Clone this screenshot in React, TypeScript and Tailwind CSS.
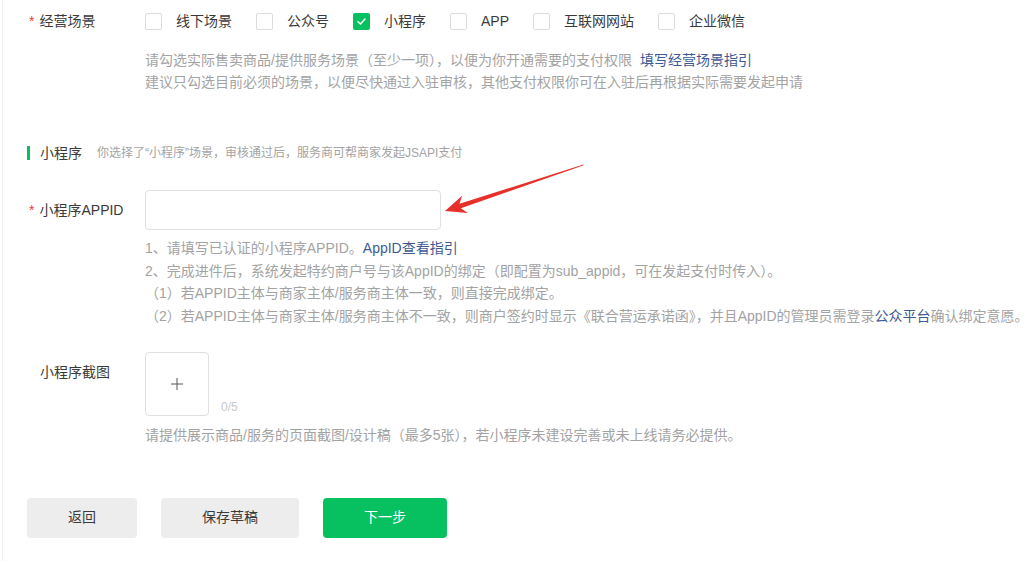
const scenes = [
  { label: "线下场景", checked: false },
  { label: "公众号", checked: false },
  { label: "小程序", checked: true },
  { label: "APP", checked: false },
  { label: "互联网网站", checked: false },
  { label: "企业微信", checked: false },
];

const font = { fontFamily: '"Liberation Sans", "Noto Sans CJK SC", sans-serif' };

function Checkbox({ checked }: { checked: boolean }) {
  if (checked) {
    return (
      <span className="flex h-[17px] w-[17px] items-center justify-center rounded-[2px] bg-[#07c160]">
        <svg width="11" height="11" viewBox="0 0 12 12" fill="none">
          <path d="M2.2 6.2 L4.9 8.8 L9.8 3.4" stroke="white" strokeWidth="1.6" strokeLinecap="round" strokeLinejoin="round" />
        </svg>
      </span>
    );
  }
  return <span className="h-[17px] w-[17px] rounded-[2px] border border-[#dcdcdc] bg-white" />;
}

export default function App() {
  return (
    <div className="relative h-[561px] w-[1033px] overflow-hidden bg-white text-[14px] text-[#3a3a3a]" style={font}>
      <div className="ml-[2px] h-full border-l border-[#f2f2f2]">
        {/* 经营场景 */}
        <div className="flex pt-[12px]">
          <div className="flex w-[142px] items-center pl-[26px] leading-[18px]">
            <span className="mr-[5px] text-[#e64340]">*</span>
            <span>经营场景</span>
          </div>
          <div className="flex items-center leading-[18px]">
            {scenes.map((s) => (
              <label key={s.label} className="mr-[24px] flex items-center gap-[14px]">
                <Checkbox checked={s.checked} />
                <span>{s.label}</span>
              </label>
            ))}
          </div>
        </div>
        <div className="ml-[142px] mt-[19px] leading-[22px] text-[#a3a3a3]">
          <p>
            请勾选实际售卖商品/提供服务场景（至少一项），以便为你开通需要的支付权限
            <span className="ml-[8px] text-[#3e5a93]">填写经营场景指引</span>
          </p>
          <p>建议只勾选目前必须的场景，以便尽快通过入驻审核，其他支付权限你可在入驻后再根据实际需要发起申请</p>
        </div>

        {/* 小程序 section header */}
        <div className="mt-[50px] flex items-center pl-[24px] leading-[20px]">
          <span className="mr-[10px] h-[14px] w-[3px] bg-[#07c160]" />
          <span className="text-[14px]">小程序</span>
          <span className="ml-[15px] text-[12px] text-[#a3a3a3]">你选择了“小程序”场景，审核通过后，服务商可帮商家发起JSAPI支付</span>
        </div>

        {/* APPID */}
        <div className="mt-[27px] flex items-center">
          <div className="flex w-[142px] items-center pl-[26px]">
            <span className="mr-[5px] text-[#e64340]">*</span>
            <span>小程序APPID</span>
          </div>
          <input className="h-[40px] w-[296px] rounded-[4px] border border-[#e0e0e0] px-3 outline-none" />
        </div>
        <div className="ml-[142px] mt-[7px] leading-[22.7px] text-[#a3a3a3]">
          <p>
            1、请填写已认证的小程序APPID。<span className="text-[#3e5a93]">AppID查看指引</span>
          </p>
          <p>2、完成进件后，系统发起特约商户号与该AppID的绑定（即配置为sub_appid，可在发起支付时传入）。</p>
          <p className="whitespace-nowrap">（1）若APPID主体与商家主体/服务商主体一致，则直接完成绑定。</p>
          <p className="whitespace-nowrap">
            （2）若APPID主体与商家主体/服务商主体不一致，则商户签约时显示《联合营运承诺函》，并且AppID的管理员需登录
            <span className="text-[#3e5a93]">公众平台</span>确认绑定意愿。
          </p>
        </div>

        {/* 小程序截图 */}
        <div className="mt-[24px] flex">
          <div className="w-[142px] pl-[37px] pt-[10px] leading-[20px]">小程序截图</div>
          <div className="flex items-end">
            <div className="flex h-[64px] w-[64px] items-center justify-center rounded-[4px] border border-[#e0e0e0]">
              <svg width="12" height="12" viewBox="0 0 12 12">
                <path d="M6 0 V12 M0 6 H12" stroke="#555" strokeWidth="1" />
              </svg>
            </div>
            <span className="ml-[12px] text-[12px] leading-[18px] text-[#c8c8c8]">0/5</span>
          </div>
        </div>
        <p className="ml-[142px] mt-[8px] leading-[22px] text-[#a3a3a3]">
          请提供展示商品/服务的页面截图/设计稿（最多5张），若小程序未建设完善或未上线请务必提供。
        </p>

        {/* buttons */}
        <div className="mt-[52px] flex gap-[24px] pl-[24px]">
          <button className="h-[40px] w-[110px] rounded-[4px] bg-[#ededed] text-[#3a3a3a]">返回</button>
          <button className="h-[40px] w-[138px] rounded-[4px] bg-[#ededed] text-[#3a3a3a]">保存草稿</button>
          <button className="h-[40px] w-[124px] rounded-[4px] bg-[#07c160] text-white">下一步</button>
        </div>
      </div>

      {/* annotation arrow */}
      <svg className="pointer-events-none absolute inset-0" width="1033" height="561">
        <g transform="translate(445 211) rotate(-18.4)">
          <polygon points="0,0 21,-9 16,-2.3 146,-0.4 146,0.4 16,2.3 21,9" fill="#e8302a" />
        </g>
      </svg>
    </div>
  );
}
